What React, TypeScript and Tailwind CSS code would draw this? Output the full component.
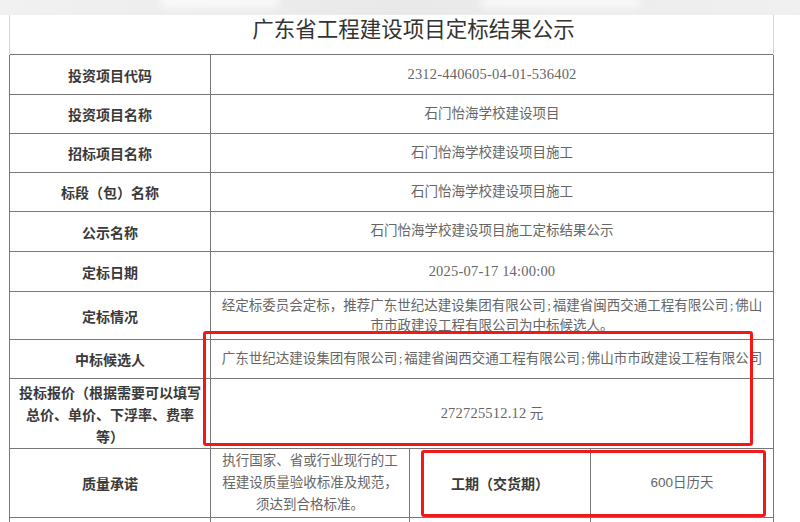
const label = "font-['Noto_Sans_CJK_SC',sans-serif] font-bold text-[14px] text-[#3a3a3a]";
const value = "font-['Liberation_Serif','Noto_Sans_CJK_SC',serif] text-[13.5px] text-[#666]";

const Semi = () => <span className="inline-block w-[7px] text-center">;</span>;
const Num = ({ children }: { children: React.ReactNode }) => (
  <span className="text-[14.5px] tracking-[0.2px]">{children}</span>
);

const rows = [
  { h: "h-[40px]", k: "投资项目代码", v: <Num>2312-440605-04-01-536402</Num> },
  { h: "h-[39px]", k: "投资项目名称", v: "石门怡海学校建设项目" },
  { h: "h-[39px]", k: "招标项目名称", v: "石门怡海学校建设项目施工" },
  { h: "h-[39px]", k: "标段（包）名称", v: "石门怡海学校建设项目施工" },
  { h: "h-[40px]", k: "公示名称", v: "石门怡海学校建设项目施工定标结果公示" },
  { h: "h-[40px]", k: "定标日期", v: <Num>2025-07-17 14:00:00</Num> },
];

const Row = ({ h, k, children }: { h: string; k: React.ReactNode; children: React.ReactNode }) => (
  <div className={`flex ${h} border-b border-[#777]`}>
    <div className={`w-[201px] shrink-0 border-r border-[#777] flex items-center justify-center text-center leading-[22px] ${label}`}>
      {k}
    </div>
    <div className={`flex-1 flex items-center justify-center text-center ${value}`}>{children}</div>
  </div>
);

export default function App() {
  return (
    <div className="relative w-[800px] h-[522px] overflow-hidden bg-white">
      {/* blurred strip above the page */}
      <div className="relative h-[15px] bg-gradient-to-r from-[#f1f1f1] via-[#e9e9e9] to-[#f0f0f0] overflow-hidden">
        <div className="absolute left-[160px] top-[-6px] w-[120px] h-[14px] rounded-full bg-white/70 blur-[4px]" />
        <div className="absolute left-[480px] top-[-4px] w-[160px] h-[12px] rounded-full bg-white/70 blur-[4px]" />
      </div>

      <div className="ml-[9px] w-[765px] border-l border-r border-[#d4d4d4]">
        <div className="h-[40px] flex justify-center border-b border-[#777]">
          <h1 className="pl-[44px] font-['Noto_Sans_CJK_SC',sans-serif] text-[21.5px] leading-[26px] text-[#333]">
            广东省工程建设项目定标结果公示
          </h1>
        </div>

        <div className="border-l border-r border-[#777] -mx-px">
          {rows.map((r) => (
            <Row key={r.k} h={r.h} k={r.k}>
              {r.v}
            </Row>
          ))}

          <Row h="h-[48px]" k="定标情况">
            <div className="leading-[20px] whitespace-nowrap">
              经定标委员会定标，推荐广东世纪达建设集团有限公司<Semi />福建省闽西交通工程有限公司<Semi />佛山
              <br />
              市市政建设工程有限公司为中标候选人。
            </div>
          </Row>

          <Row h="h-[39px]" k="中标候选人">
            <div className="whitespace-nowrap">
              广东世纪达建设集团有限公司<Semi />福建省闽西交通工程有限公司<Semi />佛山市市政建设工程有限公司
            </div>
          </Row>

          <Row
            h="h-[70px]"
            k={
              <span>
                投标报价（根据需要可以填写
                <br />
                总价、单价、下浮率、费率
                <br />
                等）
              </span>
            }
          >
            <span>
              <Num>272725512.12</Num> 元
            </span>
          </Row>

          <div className="flex h-[69px] border-b border-[#777]">
            <div className={`w-[201px] shrink-0 border-r border-[#777] flex items-center justify-center ${label}`}>
              质量承诺
            </div>
            <div className={`w-[199px] shrink-0 border-r border-[#777] flex items-center justify-center text-center leading-[22px] ${value}`}>
              <span className="whitespace-nowrap">
                执行国家、省或行业现行的工
                <br />
                程建设质量验收标准及规范，
                <br />
                须达到合格标准。
              </span>
            </div>
            <div className={`w-[181px] shrink-0 border-r border-[#777] flex items-center justify-center ${label}`}>
              工期（交货期）
            </div>
            <div className={`flex-1 flex items-center justify-center ${value}`}>
              <span className="font-['Liberation_Sans','Noto_Sans_CJK_SC',sans-serif]">600日历天</span>
            </div>
          </div>

          <div className="flex h-[40px]">
            <div className="w-[201px] shrink-0 border-r border-[#777]" />
            <div className="w-[199px] shrink-0 border-r border-[#777]" />
            <div className="w-[181px] shrink-0 border-r border-[#777]" />
            <div className="flex-1" />
          </div>
        </div>
      </div>

      {/* red annotation boxes */}
      <div className="absolute left-[203px] top-[331px] w-[550px] h-[115px] border-[3px] border-[#f01818] rounded-[3px]" />
      <div className="absolute left-[421px] top-[450px] w-[345px] h-[67px] border-[3px] border-[#f01818] rounded-[3px]" />
    </div>
  );
}
